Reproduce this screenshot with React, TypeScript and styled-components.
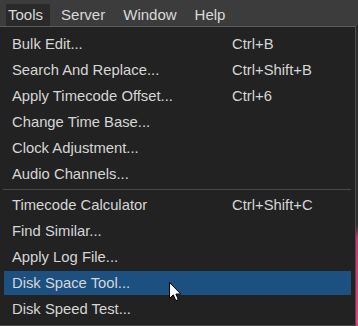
import styled, { createGlobalStyle } from 'styled-components'

const GlobalStyle = createGlobalStyle`
  html, body {
    margin: 0;
    padding: 0;
    background: #262626;
    overflow: hidden;
  }
  body {
    font-family: "Liberation Sans", Arial, sans-serif;
    -webkit-font-smoothing: antialiased;
  }
`

type Entry =
  | { kind: 'item'; label: string; shortcut?: string; active?: boolean }
  | { kind: 'separator' }

const entries: Entry[] = [
  { kind: 'item', label: 'Bulk Edit...', shortcut: 'Ctrl+B' },
  { kind: 'item', label: 'Search And Replace...', shortcut: 'Ctrl+Shift+B' },
  { kind: 'item', label: 'Apply Timecode Offset...', shortcut: 'Ctrl+6' },
  { kind: 'item', label: 'Change Time Base...' },
  { kind: 'item', label: 'Clock Adjustment...' },
  { kind: 'item', label: 'Audio Channels...' },
  { kind: 'separator' },
  { kind: 'item', label: 'Timecode Calculator', shortcut: 'Ctrl+Shift+C' },
  { kind: 'item', label: 'Find Similar...' },
  { kind: 'item', label: 'Apply Log File...' },
  { kind: 'item', label: 'Disk Space Tool...', active: true },
  { kind: 'item', label: 'Disk Speed Test...' },
]

const menus = ['Tools', 'Server', 'Window', 'Help']

const Screen = styled.div`
  position: relative;
  width: 358px;
  height: 326px;
`

const MenuBar = styled.div`
  display: flex;
  align-items: flex-end;
  height: 26px;
  padding-left: 6px;
  background: #3c3c3c;
`

const BarItem = styled.div<{ $open?: boolean }>`
  height: 22px;
  line-height: 22px;
  padding: 0 7px 0 2px;
  margin-right: 9px;
  font-size: 15px;
  color: #dadada;
  background: ${p => (p.$open ? '#2a2a2a' : 'transparent')};
`

const Body = styled.div`
  display: flex;
`

const Dropdown = styled.div`
  display: flex;
  flex-direction: column;
  width: 351px;
  padding: 4px 4px 2px 0;
  background: #222222;
  border-top: 1px solid #5c5c5c;
  border-right: 1px solid #4e4e4e;
  border-bottom: 1px solid #484848;
`

const Edge = styled.div`
  width: 2px;
  margin-top: 4px;
  height: 296px;
  background: linear-gradient(#2e2e2e 0%, #2e2e2e 66%, #c23a6c 70%, #e0457c 100%);
`

const Row = styled.div<{ $active?: boolean }>`
  display: grid;
  grid-template-columns: 220px 1fr;
  align-items: center;
  height: 24px;
  margin: 1px 0 1px 4px;
  padding-left: 8px;
  font-size: 14.8px;
  color: #d6d6d6;
  background: ${p => (p.$active ? '#1c5081' : 'transparent')};
`

const Shortcut = styled.span`
  color: #d6d6d6;
`

const Separator = styled.div`
  height: 1px;
  margin: 2px 0 2px 3px;
  background: #4a4a4a;
`

const Cursor = styled.svg`
  position: absolute;
  left: 169px;
  top: 282px;
`

export default function App() {
  return (
    <>
      <GlobalStyle />
      <Screen>
        <MenuBar>
          {menus.map(m => (
            <BarItem key={m} $open={m === 'Tools'}>
              {m}
            </BarItem>
          ))}
        </MenuBar>
        <Body>
          <Dropdown>
            {entries.map((e, i) =>
              e.kind === 'separator' ? (
                <Separator key={i} />
              ) : (
                <Row key={i} $active={e.active}>
                  <span>{e.label}</span>
                  <Shortcut>{e.shortcut}</Shortcut>
                </Row>
              ),
            )}
          </Dropdown>
          <Edge />
        </Body>
        <Cursor width="13" height="20" viewBox="0 0 13 20">
          <path
            d="M0.5 0.5 L0.5 16.5 L4.3 12.8 L6.8 18.6 L9.3 17.5 L6.9 12 L11.8 12 Z"
            fill="#ffffff"
            stroke="#000000"
            strokeWidth="1"
            strokeLinejoin="miter"
          />
        </Cursor>
      </Screen>
    </>
  )
}
